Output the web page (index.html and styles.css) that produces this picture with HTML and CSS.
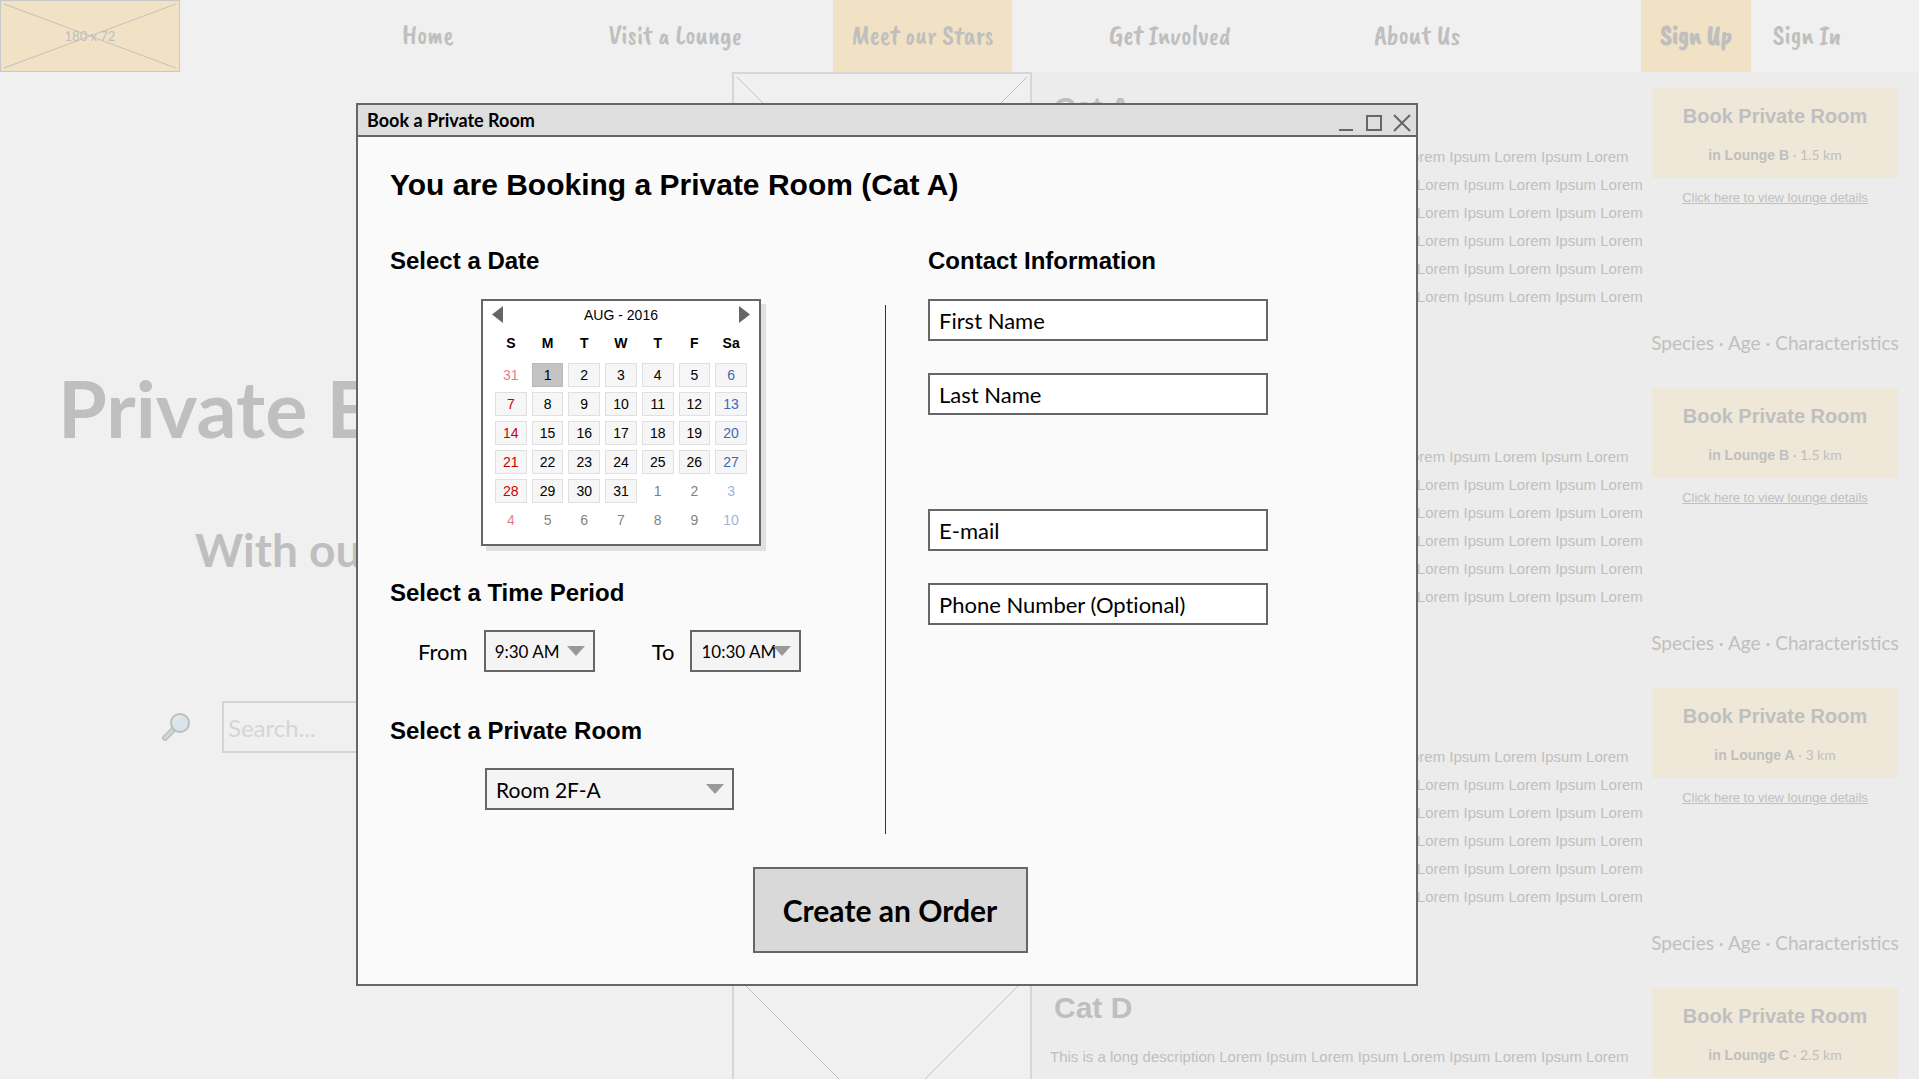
FILE: index.html
```html
<!DOCTYPE html>
<html lang="en">
<head>
<meta charset="utf-8">
<title>Book a Private Room</title>
<meta name="viewport" content="width=device-width, initial-scale=1">
<link rel="stylesheet" href="styles.css">
</head>
<body>
<header class="site-header">
  <a class="logo" href="#" aria-label="Home page">
    <svg class="logo-cross" viewBox="0 0 180 72" preserveAspectRatio="none" aria-hidden="true"><path d="M3 3 177 69M177 3 3 69"/></svg>
    <span class="logo-size">180 x 72</span>
  </a>
  <nav class="nav">
    <a class="nav-link" href="#">Home</a>
    <a class="nav-link" href="#">Visit a Lounge</a>
    <a class="nav-link active" href="#">Meet our Stars</a>
    <a class="nav-link" href="#">Get Involved</a>
    <a class="nav-link" href="#">About Us</a>
  </nav>
  <div class="account">
    <a class="nav-link sign-up" href="#">Sign Up</a>
    <a class="nav-link" href="#">Sign In</a>
  </div>
</header>

<main class="page">
  <section class="hero">
    <h1 class="hero-title">Private E</h1>
    <p class="hero-sub">With our</p>
    <form class="search">
      <svg class="search-icon" viewBox="0 0 30 30" aria-hidden="true">
        <path d="M13 17 4 26" stroke="#bcbebe" stroke-width="6" stroke-linecap="round"/>
        <path d="M12 18 4 26" stroke="#d3d6d6" stroke-width="3" stroke-linecap="round"/>
        <circle cx="19" cy="11" r="9" fill="#dae4ec" stroke="#bdbdbd" stroke-width="2"/>
        <path d="M12 13 21 4A7 7 0 0 0 12 13Z" fill="#e2e8ea"/>
      </svg>
      <input class="search-box" type="search" placeholder="Search..." aria-label="Search">
    </form>
  </section>

  <section class="cats">
    <article class="cat">
      <svg class="photo" viewBox="0 0 300 300" preserveAspectRatio="none" aria-hidden="true"><path d="M3 3 297 297M297 3 3 297"/></svg>
      <div class="about">
        <h2 class="cat-name">Cat A</h2>
        <p class="desc">This is a long description Lorem Ipsum Lorem Ipsum Lorem Ipsum Lorem Ipsum Lorem<br>Lorem Ipsum Lorem Ipsum Lorem Ipsum Lorem Ipsum Lorem Ipsum Lorem Ipsum Lorem<br>Lorem Ipsum Lorem Ipsum Lorem Ipsum Lorem Ipsum Lorem Ipsum Lorem Ipsum Lorem<br>Lorem Ipsum Lorem Ipsum Lorem Ipsum Lorem Ipsum Lorem Ipsum Lorem Ipsum Lorem<br>Lorem Ipsum Lorem Ipsum Lorem Ipsum Lorem Ipsum Lorem Ipsum Lorem Ipsum Lorem<br>Lorem Ipsum Lorem Ipsum Lorem Ipsum Lorem Ipsum Lorem Ipsum Lorem Ipsum Lorem</p>
      </div>
      <div class="booking">
        <button class="book" type="button"><span class="book-title">Book Private Room</span><span class="book-place"><b>in Lounge B</b> · 1.5 km</span></button>
        <a class="details" href="#">Click here to view lounge details</a>
        <p class="traits">Species · Age · Characteristics</p>
      </div>
    </article>
    <article class="cat">
      <svg class="photo" viewBox="0 0 300 300" preserveAspectRatio="none" aria-hidden="true"><path d="M3 3 297 297M297 3 3 297"/></svg>
      <div class="about">
        <h2 class="cat-name">Cat B</h2>
        <p class="desc">This is a long description Lorem Ipsum Lorem Ipsum Lorem Ipsum Lorem Ipsum Lorem<br>Lorem Ipsum Lorem Ipsum Lorem Ipsum Lorem Ipsum Lorem Ipsum Lorem Ipsum Lorem<br>Lorem Ipsum Lorem Ipsum Lorem Ipsum Lorem Ipsum Lorem Ipsum Lorem Ipsum Lorem<br>Lorem Ipsum Lorem Ipsum Lorem Ipsum Lorem Ipsum Lorem Ipsum Lorem Ipsum Lorem<br>Lorem Ipsum Lorem Ipsum Lorem Ipsum Lorem Ipsum Lorem Ipsum Lorem Ipsum Lorem<br>Lorem Ipsum Lorem Ipsum Lorem Ipsum Lorem Ipsum Lorem Ipsum Lorem Ipsum Lorem</p>
      </div>
      <div class="booking">
        <button class="book" type="button"><span class="book-title">Book Private Room</span><span class="book-place"><b>in Lounge B</b> · 1.5 km</span></button>
        <a class="details" href="#">Click here to view lounge details</a>
        <p class="traits">Species · Age · Characteristics</p>
      </div>
    </article>
    <article class="cat">
      <svg class="photo" viewBox="0 0 300 300" preserveAspectRatio="none" aria-hidden="true"><path d="M3 3 297 297M297 3 3 297"/></svg>
      <div class="about">
        <h2 class="cat-name">Cat C</h2>
        <p class="desc">This is a long description Lorem Ipsum Lorem Ipsum Lorem Ipsum Lorem Ipsum Lorem<br>Lorem Ipsum Lorem Ipsum Lorem Ipsum Lorem Ipsum Lorem Ipsum Lorem Ipsum Lorem<br>Lorem Ipsum Lorem Ipsum Lorem Ipsum Lorem Ipsum Lorem Ipsum Lorem Ipsum Lorem<br>Lorem Ipsum Lorem Ipsum Lorem Ipsum Lorem Ipsum Lorem Ipsum Lorem Ipsum Lorem<br>Lorem Ipsum Lorem Ipsum Lorem Ipsum Lorem Ipsum Lorem Ipsum Lorem Ipsum Lorem<br>Lorem Ipsum Lorem Ipsum Lorem Ipsum Lorem Ipsum Lorem Ipsum Lorem Ipsum Lorem</p>
      </div>
      <div class="booking">
        <button class="book" type="button"><span class="book-title">Book Private Room</span><span class="book-place"><b>in Lounge A</b> · 3 km</span></button>
        <a class="details" href="#">Click here to view lounge details</a>
        <p class="traits">Species · Age · Characteristics</p>
      </div>
    </article>
    <article class="cat">
      <svg class="photo" viewBox="0 0 300 300" preserveAspectRatio="none" aria-hidden="true"><path d="M3 3 297 297M297 3 3 297"/></svg>
      <div class="about">
        <h2 class="cat-name">Cat D</h2>
        <p class="desc">This is a long description Lorem Ipsum Lorem Ipsum Lorem Ipsum Lorem Ipsum Lorem</p>
      </div>
      <div class="booking">
        <button class="book" type="button"><span class="book-title">Book Private Room</span><span class="book-place"><b>in Lounge C</b> · 2.5 km</span></button>
      </div>
    </article>
  </section>
</main>

<div class="overlay">
  <section class="dialog" role="dialog" aria-labelledby="dialog-name">
    <div class="title-bar">
      <span class="title-text" id="dialog-name">Book a Private Room</span>
      <div class="window-buttons">
        <button class="window-button" type="button" aria-label="Minimize"><svg viewBox="0 0 18 18"><path d="M2 16H16"/></svg></button>
        <button class="window-button" type="button" aria-label="Maximize"><svg viewBox="0 0 18 18"><path d="M2 2H16V16H2Z"/></svg></button>
        <button class="window-button" type="button" aria-label="Close"><svg viewBox="0 0 18 18"><path d="M1 1 17 17M17 1 1 17"/></svg></button>
      </div>
    </div>
    <form class="dialog-body">
      <h1 class="dialog-title">You are Booking a Private Room (Cat A)</h1>
      <div class="columns">
        <div class="column">
          <h2 class="section-title">Select a Date</h2>
          <div class="calendar">
            <div class="month-bar">
              <button class="month-step" type="button" aria-label="Previous month"><svg viewBox="0 0 11 17"><path d="M11 0V17L0 8.500Z"/></svg></button>
              <span>AUG - 2016</span>
              <button class="month-step" type="button" aria-label="Next month"><svg viewBox="0 0 11 17"><path d="M0 0V17L11 8.500Z"/></svg></button>
            </div>
            <table class="days">
              <thead><tr><th>S</th><th>M</th><th>T</th><th>W</th><th>T</th><th>F</th><th>Sa</th></tr></thead>
              <tbody>
                <tr><td><button type="button" class="day out">31</button></td><td><button type="button" class="day picked">1</button></td><td><button type="button" class="day">2</button></td><td><button type="button" class="day">3</button></td><td><button type="button" class="day">4</button></td><td><button type="button" class="day">5</button></td><td><button type="button" class="day">6</button></td></tr>
                <tr><td><button type="button" class="day">7</button></td><td><button type="button" class="day">8</button></td><td><button type="button" class="day">9</button></td><td><button type="button" class="day">10</button></td><td><button type="button" class="day">11</button></td><td><button type="button" class="day">12</button></td><td><button type="button" class="day">13</button></td></tr>
                <tr><td><button type="button" class="day">14</button></td><td><button type="button" class="day">15</button></td><td><button type="button" class="day">16</button></td><td><button type="button" class="day">17</button></td><td><button type="button" class="day">18</button></td><td><button type="button" class="day">19</button></td><td><button type="button" class="day">20</button></td></tr>
                <tr><td><button type="button" class="day">21</button></td><td><button type="button" class="day">22</button></td><td><button type="button" class="day">23</button></td><td><button type="button" class="day">24</button></td><td><button type="button" class="day">25</button></td><td><button type="button" class="day">26</button></td><td><button type="button" class="day">27</button></td></tr>
                <tr><td><button type="button" class="day">28</button></td><td><button type="button" class="day">29</button></td><td><button type="button" class="day">30</button></td><td><button type="button" class="day">31</button></td><td><button type="button" class="day out">1</button></td><td><button type="button" class="day out">2</button></td><td><button type="button" class="day out">3</button></td></tr>
                <tr><td><button type="button" class="day out">4</button></td><td><button type="button" class="day out">5</button></td><td><button type="button" class="day out">6</button></td><td><button type="button" class="day out">7</button></td><td><button type="button" class="day out">8</button></td><td><button type="button" class="day out">9</button></td><td><button type="button" class="day out">10</button></td></tr>
              </tbody>
            </table>
          </div>

          <h2 class="section-title">Select a Time Period</h2>
          <div class="times">
            <div class="time">
              <label for="from">From</label>
              <div class="drop"><select id="from" class="drop-box small"><option>9:30 AM</option></select><svg class="arrow" viewBox="0 0 18 10" aria-hidden="true"><path d="M0 0H18L9 10Z"/></svg></div>
            </div>
            <div class="time">
              <label for="to">To</label>
              <div class="drop"><select id="to" class="drop-box small"><option>10:30 AM</option></select><svg class="arrow" viewBox="0 0 18 10" aria-hidden="true"><path d="M0 0H18L9 10Z"/></svg></div>
            </div>
          </div>

          <h2 class="section-title room-title">Select a Private Room</h2>
          <div class="drop room">
            <select class="drop-box" aria-label="Private room"><option>Room 2F-A</option></select><svg class="arrow" viewBox="0 0 18 10" aria-hidden="true"><path d="M0 0H18L9 10Z"/></svg>
          </div>
        </div>

        <div class="divider"></div>

        <div class="column">
          <h2 class="section-title">Contact Information</h2>
          <div class="fields">
            <input class="field" type="text" placeholder="First Name" aria-label="First name">
            <input class="field" type="text" placeholder="Last Name" aria-label="Last name">
          </div>
          <div class="fields reach">
            <input class="field" type="email" placeholder="E-mail" aria-label="E-mail">
            <input class="field" type="tel" placeholder="Phone Number (Optional)" aria-label="Phone number, optional">
          </div>
        </div>
      </div>
      <div class="actions"><button class="submit" type="submit">Create an Order</button></div>
    </form>
  </section>
</div>
</body>
</html>
```
FILE: styles.css
```css
* {
  box-sizing: border-box;
}

:root {
  --line: #666;
  --faded: #bfbfbf;
  --sans: "Liberation Sans", Arial, sans-serif;
  --lato: Lato, "Open Sans", sans-serif;
}

body {
  position: relative;
  height: 100vh;
  margin: 0;
  overflow: hidden;
  background: #f0f0f0;
  color: #000;
  font-family: var(--lato);
}

h1,
h2,
p {
  margin: 0;
}

button {
  padding: 0;
  border: 0;
  background: none;
  color: inherit;
  font: inherit;
}

a {
  color: inherit;
  text-decoration: none;
}

/* Header */

.site-header {
  display: flex;
  height: 72px;
  color: var(--faded);
}

.logo {
  position: relative;
  display: flex;
  align-items: center;
  justify-content: center;
  width: 180px;
  border: 1px solid #c8c8c8;
  background: #f1e2c6;
  font-size: 13px;
}

.logo-cross {
  position: absolute;
  inset: 0;
  width: 100%;
  height: 100%;
  fill: none;
  stroke: #c3c0bd;
}

.nav {
  display: grid;
  flex: 1;
  grid-template-columns: repeat(5, 1fr);
  justify-items: center;
  margin: 0 100px 0 124px;
}

.nav-link {
  display: flex;
  align-items: center;
  justify-content: center;
  padding: 0 18px 3px;
  font-family: "Caveat Brush", "Liberation Sans Narrow", Lato, sans-serif;
  font-size: 27px;
  font-weight: 400;
  white-space: nowrap;
}

.nav-link.active,
.sign-up {
  background: #f1e1c5;
}

.account {
  display: grid;
  grid-template-columns: 110px 112px;
  padding-right: 56px;
}

.sign-up {
  font-weight: 700;
}

/* Page behind the dialog */

.page {
  display: grid;
  grid-template-columns: minmax(0, 732fr) minmax(0, 1187fr);
  color: var(--faded);
}

.hero {
  padding: 280px 0 0 58px;
}

.hero-title {
  font-size: 79px;
  font-weight: 700;
  line-height: 112px;
}

.hero-sub {
  margin-top: 60px;
  padding-left: 137px;
  font-size: 46px;
  font-weight: 700;
  line-height: 52px;
}

.search {
  display: flex;
  align-items: center;
  gap: 31px;
  margin-top: 125px;
  padding-left: 103px;
}

.search-icon {
  width: 30px;
  height: 30px;
  fill: none;
}

.search-box {
  width: 400px;
  height: 52px;
  padding: 0 4px;
  border: 2px solid #d4d4d4;
  background: none;
  font-family: var(--lato);
  font-size: 24px;
}

.search-box::placeholder {
  color: #d5d5d5;
}

.cat {
  display: grid;
  grid-template-columns: 300px 1fr 246px;
  height: 300px;
  padding-right: 21px;
  background: #ececec;
  font-family: var(--sans);
}

.photo {
  width: 300px;
  height: 300px;
  border: 2px solid #d6d6d6;
  background: #f0f0f0;
  fill: none;
  stroke: var(--faded);
}

.about {
  padding: 16px 0 0 18px;
  white-space: nowrap;
}

.cat-name {
  padding-left: 4px;
  font-size: 30px;
  line-height: 40px;
}

.desc {
  margin-top: 15px;
  font-size: 15px;
  line-height: 28px;
}

.booking {
  display: flex;
  flex-direction: column;
  align-items: center;
  padding-top: 16px;
}

.book {
  display: flex;
  flex-direction: column;
  align-items: center;
  gap: 17px;
  width: 100%;
  height: 90px;
  padding-top: 16px;
  background: #efe7d8;
}

.book-title {
  font-size: 20px;
  font-weight: 700;
  line-height: 24px;
}

.book-place {
  font-family: var(--lato);
  font-size: 14px;
  line-height: 20px;
}

.book-place b {
  font-family: var(--sans);
}

.details {
  margin-top: 11px;
  font-size: 13px;
  line-height: 18px;
  text-decoration: underline;
}

.traits {
  margin-top: 124px;
  font-family: var(--lato);
  font-size: 19px;
  line-height: 24px;
  white-space: nowrap;
}

/* Dialog */

.overlay {
  position: absolute;
  inset: 0;
  display: grid;
  grid-template-columns: 356fr 1062fr 501fr;
  align-items: start;
  padding-top: 103px;
}

.dialog {
  grid-column: 2;
  border: 2px solid var(--line);
  background: #fafafa;
}

.title-bar {
  display: flex;
  align-items: center;
  justify-content: space-between;
  height: 32px;
  padding: 0 5px 0 9px;
  border-bottom: 2px solid var(--line);
  background: #dedede;
}

.title-text {
  font-size: 18px;
  font-weight: 700;
}

.window-buttons {
  display: flex;
  gap: 10px;
  padding-top: 5px;
}

.window-button {
  width: 18px;
  height: 18px;
}

.window-button svg {
  display: block;
  fill: none;
  stroke: var(--line);
  stroke-width: 2;
}

.dialog-body {
  padding: 30px 32px 31px;
}

.dialog-title {
  font-family: var(--sans);
  font-size: 30px;
  line-height: 36px;
}

.columns {
  display: grid;
  grid-template-columns: 495fr 1px 498fr;
  margin-top: 44px;
}

.divider {
  margin-top: 58px;
  background: #333;
}

.column {
  padding-bottom: 24px;
}

.divider + .column {
  padding-left: 42px;
}

.section-title {
  font-family: var(--sans);
  font-size: 24px;
  line-height: 28px;
}

.calendar {
  width: 280px;
  height: 247px;
  margin: 24px 0 33px 91px;
  padding: 5px 7px 7px;
  border: 2px solid var(--line);
  background: #fff;
  box-shadow: 5px 5px 0 #e0e0e0;
  font-family: var(--sans);
  font-size: 14px;
}

.month-bar {
  display: flex;
  align-items: center;
  justify-content: space-between;
  height: 17px;
  padding: 0 2px;
}

.month-step {
  width: 11px;
  height: 17px;
}

.month-step svg {
  display: block;
  fill: var(--line);
}

.days {
  width: 100%;
  border-spacing: 5px;
  table-layout: fixed;
}

.days th,
.days td {
  height: 24px;
  padding: 0;
}

.days th {
  height: 30px;
}

.day {
  display: block;
  width: 100%;
  height: 24px;
  border: 1px solid #e0e0e0;
  background: #f6f6f6;
}

.days td:first-child .day {
  color: #c00;
}

.days td:last-child .day {
  color: #46b;
}

.day.out {
  border-color: transparent;
  background: none;
  opacity: 0.5;
}

.day.picked {
  border-color: #b8b8b8;
  background: #c4c4c4;
}

.times {
  display: flex;
  gap: 57px;
  margin-top: 23px;
  padding-left: 28px;
  font-size: 22px;
}

.time {
  display: flex;
  align-items: center;
  gap: 16px;
}

.drop {
  position: relative;
  width: 111px;
}

.drop-box {
  display: block;
  width: 100%;
  height: 42px;
  padding: 0 9px;
  border: 2px solid var(--line);
  border-radius: 0;
  appearance: none;
  background: #f4f4f4;
  color: #000;
  font-family: var(--lato);
  font-size: 21px;
}

.drop-box.small {
  font-size: 17px;
}

.arrow {
  position: absolute;
  top: 16px;
  right: 10px;
  width: 18px;
  height: 10px;
  fill: #999;
  pointer-events: none;
}

.room-title {
  margin-top: 45px;
}

.room {
  width: 249px;
  margin: 23px 0 0 95px;
}

.fields {
  display: grid;
  gap: 32px;
  margin-top: 24px;
}

.reach {
  margin-top: 94px;
}

.field {
  width: 340px;
  height: 42px;
  padding: 0 9px;
  border: 2px solid var(--line);
  background: #fff;
  font-family: var(--lato);
  font-size: 22px;
  font-variant-ligatures: none;
}

.field::placeholder {
  color: #000;
}

.actions {
  display: flex;
  justify-content: center;
  margin-top: 33px;
  padding-left: 6px;
}

.submit {
  width: 275px;
  height: 86px;
  border: 2px solid var(--line);
  background: #d9d9d9;
  font-size: 30px;
  font-weight: 700;
}
```
